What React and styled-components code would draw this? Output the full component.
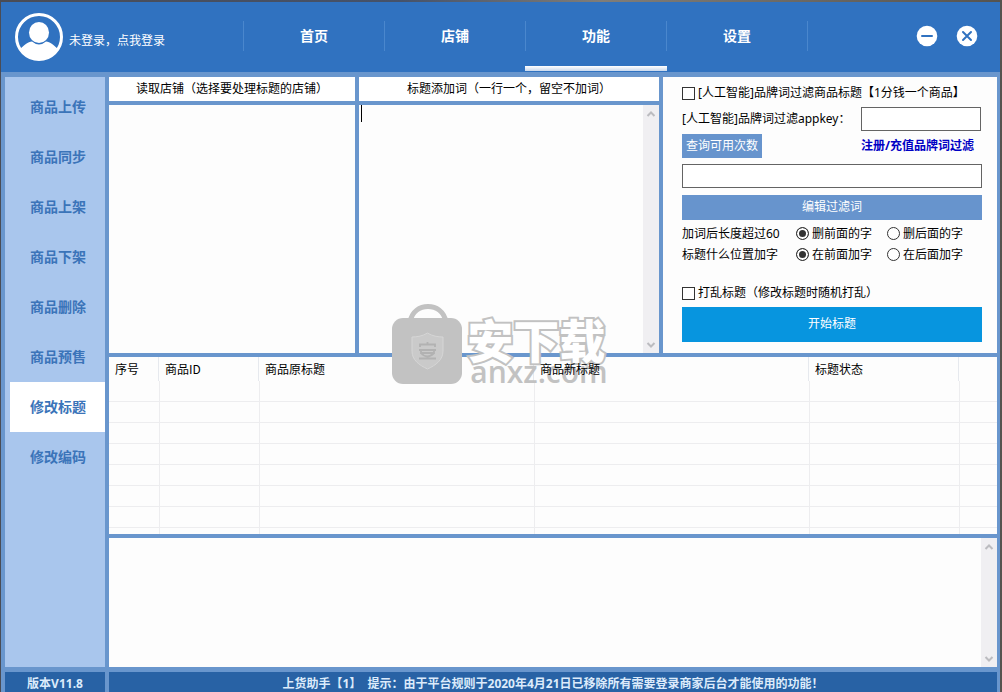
import React, { useState } from "react";
import styled, { createGlobalStyle, css } from "styled-components";

const frame = "#6996cd";

const GlobalStyle = createGlobalStyle`
  * { box-sizing: border-box; }
  body {
    margin: 0;
    background: #3c4350;
    color: #000;
    font: 12px/16px "Noto Sans", "Noto Sans CJK SC", sans-serif;
  }
  button, input, textarea { font: inherit; color: inherit; }
`;

const Desktop = styled.div`
  position: relative;
  display: flex;
  flex-direction: column;
  min-height: 100vh;
  padding: 2px 2px 0 1px;
  background: linear-gradient(90deg, #4a4c55, #45526a 40%, #807d78 60%, #55534f);
`;

const Header = styled.header`
  display: flex;
  height: 70px;
  background: #3072c0;
  color: #fff;
`;

const Account = styled.button`
  display: flex;
  align-items: center;
  gap: 6px;
  width: 242px;
  padding: 0 0 0 14px;
  border: 0;
  background: none;
  text-align: left;
`;

const AccountName = styled.span`
  padding-top: 8px;
`;

const Nav = styled.nav`
  display: flex;
  flex: 1;
`;

const NavTab = styled.button`
  flex: 0 0 142px;
  margin-right: -1px;
  padding: 0 0 2px;
  border: 0;
  background:
    linear-gradient(#4a87cd, #4a87cd) left 19px / 1px 30px no-repeat,
    linear-gradient(#4a87cd, #4a87cd) right 19px / 1px 30px no-repeat,
    ${(p) => (p.$active ? "linear-gradient(#fff, #c9d8ec) left 64px / 100% 5px no-repeat" : "none")};
  font-size: 14px;
  font-weight: 700;
`;

const WindowButtons = styled.div`
  display: flex;
  align-items: center;
  gap: 18px;
  padding: 0 22px 2px 0;
`;

const RoundButton = styled.button`
  display: flex;
  padding: 0;
  border: 0;
  background: none;
`;

const Body = styled.div`
  display: flex;
  flex: 1;
  gap: 4px;
  padding: 5px 3px 5px 4px;
  background: ${frame};
`;

const Sidebar = styled.nav`
  display: flex;
  flex-direction: column;
  flex: 0 0 100px;
  padding: 5px 0 5px 5px;
  background: #a9c6ed;
`;

const SideItem = styled.button`
  height: 50px;
  padding: 0 0 0 20px;
  border: 0;
  background: ${(p) => (p.$active ? "#fff" : "none")};
  color: #3b74b9;
  font-size: 14px;
  font-weight: 700;
  text-align: left;
`;

const Main = styled.main`
  display: flex;
  flex: 1;
  flex-direction: column;
  gap: 4px;
  min-width: 0;
`;

const TopRow = styled.div`
  display: grid;
  grid-template-columns: 246px 300px 1fr;
  gap: 4px;
  min-height: 276px;
`;

const Column = styled.section`
  display: flex;
  flex-direction: column;
  gap: 4px;
`;

const ColumnTitle = styled.label`
  padding: 4px 0;
  background: #fff;
  text-align: center;
`;

const ShopList = styled.div`
  flex: 1;
  background: #fdfdfd;
`;

const EditorBox = styled.div`
  display: flex;
  flex: 1;
  background: #fdfdfd;
`;

const Editor = styled.textarea`
  flex: 1;
  min-width: 0;
  padding: 0 2px;
  border: 0;
  outline: 0;
  background: none;
  resize: none;
`;

const Caret = styled.span`
  width: 1px;
  height: 17px;
  margin-left: 2px;
  background: #000;
`;

const ScrollTrack = styled.div`
  display: flex;
  flex-direction: column;
  justify-content: space-between;
  align-items: center;
  width: 16px;
  padding: 5px 0 4px;
  background: #f0eff2;
`;

const Options = styled.form`
  display: flex;
  flex-direction: column;
  padding: 8px 15px 5px 19px;
  background: #fdfdfd;
`;

const Row = styled.div`
  display: flex;
  align-items: center;
  justify-content: ${(p) => (p.$spread ? "space-between" : "flex-start")};
  height: ${(p) => p.$height}px;
`;

const Choice = styled.label`
  display: flex;
  align-items: center;
  gap: 3px;
  width: ${(p) => p.$width || "auto"};
  white-space: nowrap;
`;

const choiceMark = css`
  appearance: none;
  flex: none;
  width: 13px;
  height: 13px;
  margin: 0;
  border: 1px solid #333;
  background: #fff;
`;

const Tick = styled.input.attrs({ type: "checkbox" })`
  ${choiceMark}
  &:checked { background: #333; box-shadow: inset 0 0 0 2px #fff; }
`;

const Radio = styled.input.attrs({ type: "radio" })`
  ${choiceMark}
  border-radius: 50%;
  &:checked { background: #333; box-shadow: inset 0 0 0 2px #fff; }
`;

const RowLabel = styled.span`
  width: 114px;
`;

const TextBox = styled.input.attrs({ type: "text" })`
  width: ${(p) => p.$width};
  height: 24px;
  padding: 0 4px;
  border: 1px solid #646464;
  background: #fff;
`;

const KeyBoxWrap = styled.div`
  padding-right: 1px;
`;

const ActionButton = styled.button`
  width: ${(p) => p.$width || "100%"};
  height: ${(p) => p.$height}px;
  padding: 0;
  border: 0;
  background: ${(p) => (p.$primary ? "#0795df" : "#6794cd")};
  color: #fff;
`;

const TopUpLink = styled.a`
  padding-right: 8px;
  color: #0000c4;
  font-weight: 700;
  text-decoration: none;
`;

const TablePane = styled.section`
  height: 177px;
  overflow: hidden;
  background: #fdfdfd;
`;

const Table = styled.table`
  width: 100%;
  table-layout: fixed;
  border-collapse: separate;
  border-spacing: 0;
`;

const HeadCell = styled.th`
  width: ${(p) => p.$width || "auto"};
  height: 24px;
  padding: 0 0 0 6px;
  border-right: ${(p) => (p.$width ? "1px solid #e6e9ee" : "0")};
  font-weight: 400;
  text-align: left;
`;

const HeadText = styled.span`
  position: relative;
  z-index: 2;
  font-family: "Noto Sans CJK SC", sans-serif;
`;

const Cell = styled.td`
  height: 21px;
  padding: 0;
  border-bottom: 1px solid #ededef;
  border-left: ${(p) => (p.$first ? "0" : "1px solid #ededef")};
`;

const LogPane = styled.section`
  display: flex;
  flex: 1;
  min-height: 120px;
  background: #fdfdfd;
`;

const Footer = styled.footer`
  display: flex;
  gap: 4px;
  padding: 0 3px 0 4px;
  background: ${frame};
  color: #dcebfb;
  font-weight: 700;
`;

const FooterCell = styled.div`
  flex: ${(p) => (p.$width ? `0 0 ${p.$width}` : "1")};
  height: 20px;
  padding-top: 4px;
  background: #2862a5;
  text-align: center;
  white-space: pre;
`;

const Watermark = styled.div`
  position: absolute;
  inset: 0;
  z-index: 1;
  display: flex;
  align-items: center;
  justify-content: center;
  gap: 4px;
  padding: 0 2px 4px 0;
  pointer-events: none;
`;

const WatermarkWords = styled.div`
  display: flex;
  flex-direction: column;
  padding-top: 12px;
  color: #c2c2c2;
`;

const WatermarkName = styled.span`
  color: #fff;
  font: 900 46px/44px "Noto Sans CJK SC", sans-serif;
  paint-order: stroke fill;
  stroke-linejoin: round;
  -webkit-text-stroke: 4px #c2c2c2;
`;

const WatermarkSite = styled.span`
  padding-left: 3px;
  font: 600 30px/24px "Open Sans", sans-serif;
`;

function Avatar() {
  return (
    <svg width="48" height="48" viewBox="0 0 48 48" aria-hidden="true">
      <defs>
        <clipPath id="face"><circle cx="24" cy="24" r="23" /></clipPath>
      </defs>
      <circle cx="24" cy="24" r="22.500" fill="#3072c0" stroke="#fff" strokeWidth="3" />
      <g clipPath="url(#face)" fill="#fff">
        <ellipse cx="24" cy="19.500" rx="10" ry="10.500" />
        <path d="M4 37C9 32 13 29 17 28.500Q24 34.500 31 28.500C35 29 39 32 44 37L40 48H8Z" />
      </g>
    </svg>
  );
}

function RoundIcon({ close }) {
  return (
    <svg width="22" height="22" viewBox="0 0 22 22" aria-hidden="true">
      <circle cx="11" cy="11" r="10.300" fill="#fff" />
      <path
        d={close ? "M7 7L15 15M15 7L7 15" : "M6 11H16"}
        stroke="#3072c0"
        strokeWidth="2"
        strokeLinecap="round"
      />
    </svg>
  );
}

function Chevron({ down }) {
  return (
    <svg width="10" height="8" viewBox="0 0 10 8" aria-hidden="true">
      <path d={down ? "M1.500 2L5 5.500L8.500 2" : "M1.500 6L5 2.500L8.500 6"} fill="none" stroke="#bcbcc0" strokeWidth="2" />
    </svg>
  );
}

function Scrollbar() {
  return (
    <ScrollTrack>
      <Chevron />
      <Chevron down />
    </ScrollTrack>
  );
}

function Bag() {
  return (
    <svg width="71" height="80" viewBox="0 0 71 80" aria-hidden="true">
      <path d="M18 18C20 7 28 2.500 36 2.500S52 7 54 18" fill="none" stroke="#c2c2c2" strokeWidth="5" />
      <rect y="14" width="70" height="66" rx="11" fill="#c2c2c2" />
      <path d="M35.500 29C40 32 46 33 51 33V47C51 56 44 61 35.500 65C27 61 20 56 20 47V33C25 33 31 32 35.500 29Z" fill="#cacaca" stroke="#d6d6d6" />
      <path d="M28 43V40.500H43V43M35.500 38V40M27 46H44M29 46V49H42V46M29 49Q35 56 42 49M27 54.500H44" fill="none" stroke="#b2b2b2" strokeWidth="1.800" />
    </svg>
  );
}

const tabs = ["首页", "店铺", "功能", "设置"];
const sideItems = ["商品上传", "商品同步", "商品上架", "商品下架", "商品删除", "商品预售", "修改标题", "修改编码"];
const columns = [
  ["序号", "50px"],
  ["商品ID", "100px"],
  ["商品原标题", "275px"],
  ["商品新标题", "275px"],
  ["标题状态", "150px"],
  ["", null],
];
const choices = [
  { name: "trim", label: "加词后长度超过60", options: ["删前面的字", "删后面的字"] },
  { name: "place", label: "标题什么位置加字", options: ["在前面加字", "在后面加字"] },
];

export default function App() {
  const [tab, setTab] = useState("功能");
  const [side, setSide] = useState("修改标题");

  return (
    <Desktop>
      <GlobalStyle />
      <Header>
        <Account>
          <Avatar />
          <AccountName>未登录，点我登录</AccountName>
        </Account>
        <Nav>
          {tabs.map((t) => (
            <NavTab key={t} $active={t === tab} onClick={() => setTab(t)}>{t}</NavTab>
          ))}
        </Nav>
        <WindowButtons>
          <RoundButton aria-label="最小化"><RoundIcon /></RoundButton>
          <RoundButton aria-label="关闭"><RoundIcon close /></RoundButton>
        </WindowButtons>
      </Header>

      <Body>
        <Sidebar>
          {sideItems.map((s) => (
            <SideItem key={s} $active={s === side} onClick={() => setSide(s)}>{s}</SideItem>
          ))}
        </Sidebar>
        <Main>
          <TopRow>
            <Column>
              <ColumnTitle as="div">读取店铺（选择要处理标题的店铺）</ColumnTitle>
              <ShopList />
            </Column>
            <Column>
              <ColumnTitle htmlFor="words">标题添加词（一行一个，留空不加词）</ColumnTitle>
              <EditorBox>
                <Caret />
                <Editor id="words" />
                <Scrollbar />
              </EditorBox>
            </Column>
            <Options onSubmit={(e) => e.preventDefault()}>
              <Row $height={16}>
                <Choice><Tick />[人工智能]品牌词过滤商品标题【1分钱一个商品】</Choice>
              </Row>
              <Row $height={36} $spread>
                <label htmlFor="appkey">[人工智能]品牌词过滤appkey：</label>
                <KeyBoxWrap><TextBox id="appkey" $width="120px" /></KeyBoxWrap>
              </Row>
              <Row $height={18} $spread>
                <ActionButton type="button" $width="80px" $height={24}>查询可用次数</ActionButton>
                <TopUpLink href="#topup">注册/充值品牌词过滤</TopUpLink>
              </Row>
              <Row $height={42}>
                <TextBox aria-label="查询结果" $width="100%" />
              </Row>
              <Row $height={20}>
                <ActionButton type="button" $height={25}>编辑过滤词</ActionButton>
              </Row>
              <Row $height={6} />
              {choices.map((c) => (
                <Row key={c.name} $height={21} role="radiogroup" aria-label={c.label}>
                  <RowLabel>{c.label}</RowLabel>
                  {c.options.map((o, i) => (
                    <Choice key={o} $width={i === 0 ? "91px" : undefined}>
                      <Radio name={c.name} defaultChecked={i === 0} />{o}
                    </Choice>
                  ))}
                </Row>
              ))}
              <Row $height={20} />
              <Row $height={16}>
                <Choice><Tick />打乱标题（修改标题时随机打乱）</Choice>
              </Row>
              <Row $height={46}>
                <ActionButton type="submit" $primary $height={35}>开始标题</ActionButton>
              </Row>
            </Options>
          </TopRow>

          <TablePane>
            <Table>
              <thead>
                <tr>
                  {columns.map(([name, width]) => (
                    <HeadCell key={name} $width={width}><HeadText>{name}</HeadText></HeadCell>
                  ))}
                </tr>
              </thead>
              <tbody>
                {Array.from({ length: 8 }, (_, r) => (
                  <tr key={r}>
                    {columns.map(([name], i) => <Cell key={name} $first={i === 0} />)}
                  </tr>
                ))}
              </tbody>
            </Table>
          </TablePane>

          <LogPane>
            <Editor aria-label="日志" readOnly />
            <Scrollbar />
          </LogPane>
        </Main>
      </Body>

      <Footer>
        <FooterCell $width="100px">版本V11.8</FooterCell>
        <FooterCell>上货助手【1】  提示：由于平台规则于2020年4月21日已移除所有需要登录商家后台才能使用的功能！</FooterCell>
      </Footer>

      <Watermark>
        <Bag />
        <WatermarkWords>
          <WatermarkName>安下载</WatermarkName>
          <WatermarkSite>anxz.com</WatermarkSite>
        </WatermarkWords>
      </Watermark>
    </Desktop>
  );
}
